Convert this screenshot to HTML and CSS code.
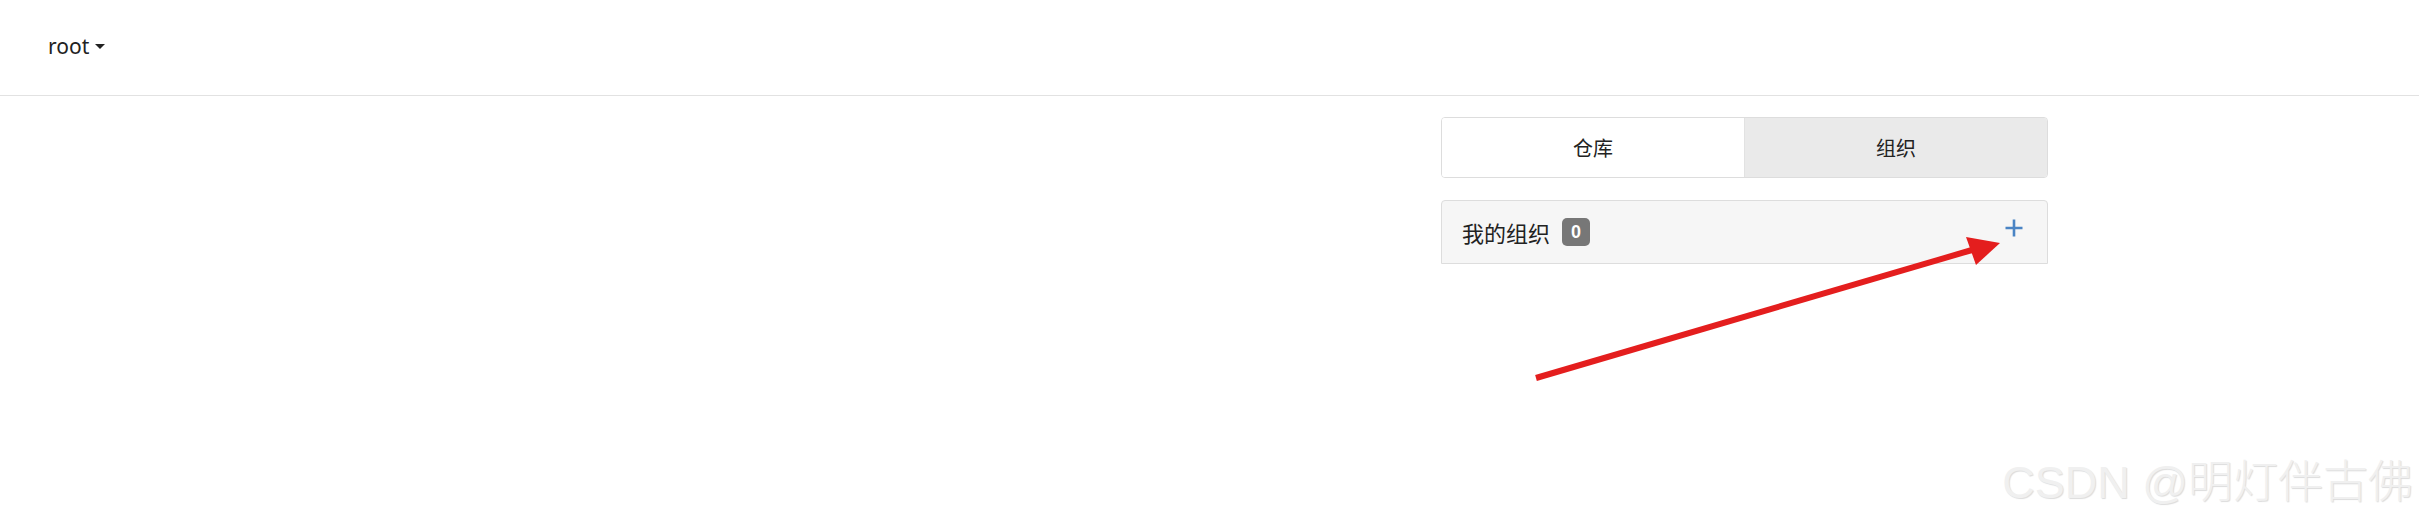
FILE: index.html
```html
<!DOCTYPE html>
<html lang="zh-CN">
<head>
  <meta charset="UTF-8" />
  <title>组织</title>
  <meta name="viewport" content="width=device-width, initial-scale=1" />
  <link rel="stylesheet" href="styles.css">
</head>
<body>
  <header class="topbar">
    <a class="user-menu" href="#">root <span class="caret"></span></a>
  </header>
  <main class="layout">
    <div class="spacer"></div>
    <aside class="side">
      <nav class="tabs">
        <a class="tab" href="#">仓库</a>
        <a class="tab active" href="#">组织</a>
      </nav>
      <section class="panel">
        <div class="panel-heading">
          <h3 class="panel-title">我的组织 <span class="badge">0</span></h3>
          <a class="add-btn" href="#" title="新建组织">
            <svg width="18" height="18" viewBox="0 0 18 18">
              <path d="M9 0.5V17.5M0.5 9H17.5" stroke="#4a84c4" stroke-width="2.6" fill="none"/>
            </svg>
          </a>
        </div>
      </section>
    </aside>
  </main>

  <svg class="annotation" width="2419" height="516" viewBox="0 0 2419 516">
    <line x1="1536" y1="378" x2="1972" y2="250" stroke="#e41e1e" stroke-width="6"/>
    <polygon points="2000,243 1966,237 1976,265" fill="#e41e1e"/>
  </svg>
  <div class="watermark">CSDN @明灯伴古佛</div>
</body>
</html>
```

FILE: styles.css
```css
*, *::before, *::after {
  box-sizing: border-box;
}

body {
  font-family: "Noto Sans", "Noto Sans CJK SC", sans-serif;
  background-color: #ffffff;
  color: #333333;
  margin: 0;
  padding: 0;
  min-height: 516px;
  position: relative;
  overflow: hidden;
}

a {
  color: inherit;
  text-decoration: none;
}

/* Top bar */
.topbar {
  height: 96px;
  padding: 0 48px;
  border-bottom: 1px solid #e2e2e2;
  display: flex;
  align-items: center;
}

.user-menu {
  font-size: 21px;
  color: #222222;
  display: flex;
  align-items: center;
  gap: 6px;
  padding-bottom: 4px;
}

.caret {
  width: 0;
  height: 0;
  border-top: 5px solid #222222;
  border-left: 5px solid transparent;
  border-right: 5px solid transparent;
  margin-top: 1px;
}

/* Layout */
.layout {
  display: grid;
  grid-template-columns: 1441px 607px;
  padding-top: 21px;
}

/* Tabs */
.tabs {
  display: flex;
  height: 61px;
  border: 1px solid #dddddd;
  border-radius: 4px;
  overflow: hidden;
}

.tab {
  flex: 1;
  display: flex;
  align-items: center;
  justify-content: center;
  font-size: 20px;
  color: #222222;
  background-color: #ffffff;
}

.tab.active {
  background-color: #eaeaea;
  border-left: 1px solid #e2e2e2;
}

/* Panel */
.panel {
  margin-top: 22px;
}

.panel-heading {
  height: 64px;
  background-color: #f6f6f6;
  border: 1px solid #dddddd;
  border-radius: 4px 4px 0 0;
  padding: 0 24px 0 20px;
  display: flex;
  align-items: center;
  justify-content: space-between;
}

.panel-title {
  margin: 0;
  font-size: 22px;
  font-weight: 400;
  color: #222222;
  display: flex;
  align-items: center;
  gap: 12px;
}

.badge {
  display: inline-flex;
  align-items: center;
  justify-content: center;
  width: 28px;
  height: 28px;
  border-radius: 5px;
  background-color: #777777;
  color: #ffffff;
  font-size: 18px;
  font-weight: 700;
  font-family: "Liberation Sans", sans-serif;
}

.add-btn {
  display: flex;
  margin-top: -8px;
}

/* Screenshot annotation overlay */
.annotation {
  position: absolute;
  left: 0;
  top: 0;
  pointer-events: none;
}

.watermark {
  position: absolute;
  right: 6px;
  top: 446px;
  font-family: "Liberation Sans", "Noto Sans CJK SC", sans-serif;
  font-size: 45px;
  font-weight: 300;
  color: #f0f0f0;
  text-shadow: 1px 1px 1px rgba(0, 0, 0, 0.14);
  white-space: nowrap;
  pointer-events: none;
}
```
